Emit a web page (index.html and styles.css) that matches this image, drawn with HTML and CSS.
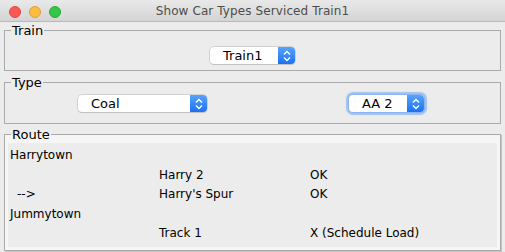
FILE: index.html
```html
<!DOCTYPE html>
<html lang="en">
<head>
    <meta charset="UTF-8">
    <title>Show Car Types Serviced Train1</title>
    <link rel="stylesheet" href="styles.css">
</head>
<body>

<div class="window">
    <div class="titlebar">
        <div class="lights">
            <span class="light red"></span>
            <span class="light yellow"></span>
            <span class="light green"></span>
        </div>
        <div class="title">Show Car Types Serviced Train1</div>
    </div>

    <fieldset class="frame train-frame">
        <legend>Train</legend>
        <div class="combo train-combo">
            <span class="combo-text">Train1</span>
            <span class="combo-arrow"><svg width="8" height="12" viewBox="0 0 8 12"><path d="M1 4.5 L4 1.5 L7 4.5 M1 7.5 L4 10.5 L7 7.5" fill="none" stroke="#fff" stroke-width="1.4"/></svg></span>
        </div>
    </fieldset>

    <fieldset class="frame type-frame">
        <legend>Type</legend>
        <div class="type-row">
            <div class="combo coal-combo">
                <span class="combo-text">Coal</span>
                <span class="combo-arrow"><svg width="8" height="12" viewBox="0 0 8 12"><path d="M1 4.5 L4 1.5 L7 4.5 M1 7.5 L4 10.5 L7 7.5" fill="none" stroke="#fff" stroke-width="1.4"/></svg></span>
            </div>
            <div class="combo aa-combo focused">
                <span class="combo-text">AA 2</span>
                <span class="combo-arrow"><svg width="8" height="12" viewBox="0 0 8 12"><path d="M1 4.5 L4 1.5 L7 4.5 M1 7.5 L4 10.5 L7 7.5" fill="none" stroke="#fff" stroke-width="1.4"/></svg></span>
            </div>
        </div>
    </fieldset>

    <fieldset class="frame route-frame">
        <legend>Route</legend>
        <div class="route">
            <div class="row"><span class="c1">Harrytown</span><span class="c2"></span><span class="c3"></span></div>
            <div class="row"><span class="c1"></span><span class="c2">Harry 2</span><span class="c3">OK</span></div>
            <div class="row"><span class="c1 arrow">--&gt;</span><span class="c2">Harry's Spur</span><span class="c3">OK</span></div>
            <div class="row"><span class="c1">Jummytown</span><span class="c2"></span><span class="c3"></span></div>
            <div class="row"><span class="c1"></span><span class="c2">Track 1</span><span class="c3">X (Schedule Load)</span></div>
        </div>
    </fieldset>
</div>

</body>
</html>
```

FILE: styles.css
```css
html, body {
    margin: 0;
    padding: 0;
}
body {
    width: 505px;
    height: 252px;
    overflow: hidden;
    font-family: "DejaVu Sans", "Noto Sans", sans-serif;
    font-size: 12px;
    color: #000;
    background-color: #ececec;
}
.window {
    width: 505px;
    height: 252px;
    background-color: #ececec;
}
.titlebar {
    position: relative;
    height: 22px;
    background: linear-gradient(#e9e9e9, #d4d4d4);
    border-bottom: 1px solid #b9b9b9;
    box-sizing: border-box;
    display: flex;
    align-items: center;
    justify-content: center;
}
.lights {
    position: absolute;
    left: 9px;
    top: 6px;
    display: flex;
    gap: 8px;
}
.light {
    width: 12px;
    height: 12px;
    border-radius: 50%;
    box-sizing: border-box;
}
.red { background-color: #fc5753; border: 1px solid #df4744; }
.yellow { background-color: #fdbc40; border: 1px solid #de9f34; }
.green { background-color: #33c748; border: 1px solid #27aa35; }
.title {
    font-size: 12px;
    color: #4d4d4d;
    padding-top: 1px;
    letter-spacing: 0.1px;
}

.frame {
    border: 1px solid #aaaaaa;
    margin: 0 4px;
    padding: 0;
    min-width: 0;
}
.frame legend {
    padding: 0 1px;
    margin-left: 6px;
    font-size: 13px;
    line-height: 15px;
}
.train-frame {
    margin-top: 1px;
    height: 48px;
    box-sizing: border-box;
    display: flex;
    justify-content: center;
}
.train-frame .combo {
    margin: 9px auto 0;
}
.type-frame {
    margin-top: 4px;
}
.type-row {
    display: flex;
    height: 33px;
    padding-top: 5px;
    box-sizing: border-box;
}

.combo {
    display: flex;
    height: 17px;
    background-color: #fff;
    border-radius: 4px;
    box-shadow: 0 0 0 0.5px #b8b8b8, 0 1px 1px rgba(0,0,0,0.15);
    font-size: 13px;
    line-height: 17px;
    overflow: hidden;
}
.combo-text {
    flex: 1;
    padding-left: 13px;
}
.combo-arrow {
    width: 17px;
    background: linear-gradient(#5aa3fb, #1a71f5);
    display: flex;
    align-items: center;
    justify-content: center;
}
.train-combo { width: 85px; }
.coal-combo { width: 129px; margin-left: 73px; }
.aa-combo { width: 75px; margin-left: 142px; }
.focused {
    box-shadow: 0 0 0 1px #8bb5f0, 0 0 1px 3px rgba(100, 160, 240, 0.55);
}

.route-frame {
    margin-top: 3px;
    height: 124px;
    box-sizing: border-box;
    background-color: #f6f6f6;
    box-shadow: 1px 1px 0 #c4c4c4;
}
.route {
    margin: 1px 3px 0 3px;
    height: 104px;
    padding-top: 3px;
    box-sizing: border-box;
    background-color: #ececec;
}
.row {
    display: flex;
    height: 19.6px;
    line-height: 19.6px;
    font-size: 12px;
}
.c1 { width: 149px; padding-left: 2px; }
.c2 { width: 151px; }
.c3 { flex: 1; }
.arrow { padding-left: 9px; width: 142px; }
```
